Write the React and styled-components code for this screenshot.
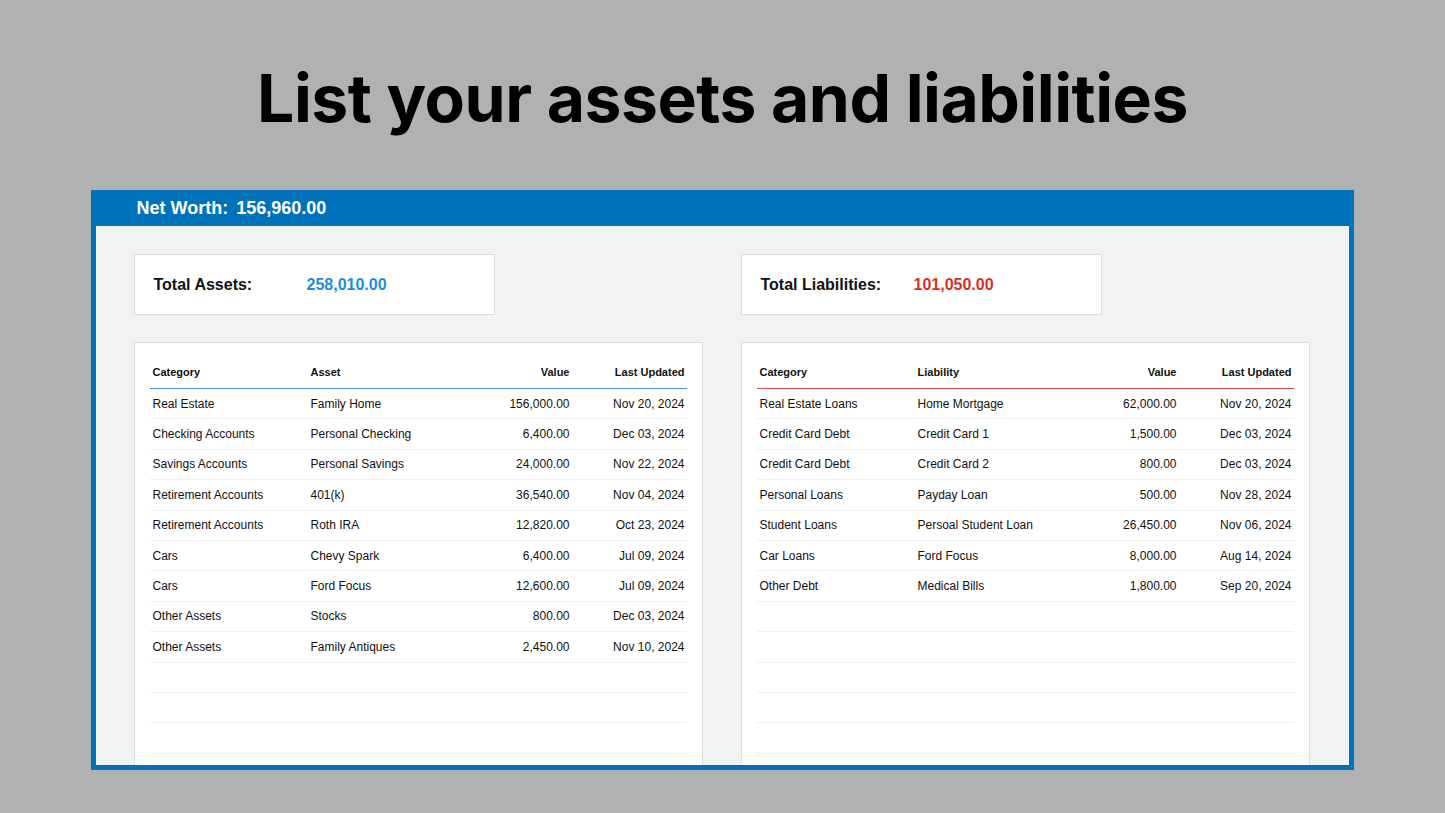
import styled, { createGlobalStyle } from 'styled-components';

const Global = createGlobalStyle`
  body { margin: 0; background: #b0b1b3; font-family: "Liberation Sans", Arial, sans-serif; }
`;

const Page = styled.div`
  width: 1445px;
  height: 813px;
  overflow: hidden;
  display: flex;
  flex-direction: column;
  align-items: center;
`;

const Heading = styled.h1`
  margin: 60px 0 0;
  height: 76px;
  font-family: Inter, "Liberation Sans", sans-serif;
  font-weight: 700;
  font-size: 66px;
  line-height: 76px;
  letter-spacing: -0.5px;
  color: #000;
`;

const Frame = styled.div`
  margin-top: 54px;
  margin-left: -1px;
  width: 1253px;
  height: 575px;
  flex-shrink: 0;
  border: 5px solid #0072bb;
  border-top: none;
  background: #f1f2f4;
  display: flex;
  flex-direction: column;
  overflow: hidden;
`;

const Bar = styled.div`
  background: #0072bb;
  height: 36px;
  flex-shrink: 0;
  margin: 0 -5px;
  padding-left: 46px;
  display: flex;
  align-items: center;
  gap: 8px;
  color: #fff;
  font-weight: 700;
  font-size: 18px;
`;

const Body = styled.div`
  padding: 28px 39px 0 38px;
  display: grid;
  grid-template-columns: 569px 569px;
  column-gap: 38px;
  row-gap: 27px;
`;

const Summary = styled.div`
  width: 361px;
  height: 61px;
  box-sizing: border-box;
  background: #fff;
  border: 1px solid #dcdde0;
  display: flex;
  align-items: center;
  padding-left: 19px;
  font-size: 16px;
  font-weight: 700;
`;

const SumLabel = styled.span`
  width: 153px;
  color: #111;
`;

const SumValue = styled.span`
  color: ${p => p.$color};
`;

const Card = styled.div`
  background: #fff;
  border: 1px solid #dcdde0;
  height: 460px;
  box-sizing: border-box;
  padding: 20px 15px 0;
`;

const Table = styled.table`
  width: 100%;
  border-collapse: collapse;
  font-size: 12px;
  color: #111;
`;

const Th = styled.th`
  font-size: 11px;
  font-weight: 700;
  text-align: ${p => (p.$right ? 'right' : 'left')};
  padding: 0 2px 8px 3px;
  height: 17px;
  border-bottom: 1.5px solid ${p => p.$line};
  width: ${p => p.$w || 'auto'};
`;

const Td = styled.td`
  text-align: ${p => (p.$right ? 'right' : 'left')};
  padding: 0 2px 0 3px;
  height: 29.4px;
  border-bottom: 1px solid #eeeff1;
`;

const assets = [
  ['Real Estate', 'Family Home', '156,000.00', 'Nov 20, 2024'],
  ['Checking Accounts', 'Personal Checking', '6,400.00', 'Dec 03, 2024'],
  ['Savings Accounts', 'Personal Savings', '24,000.00', 'Nov 22, 2024'],
  ['Retirement Accounts', '401(k)', '36,540.00', 'Nov 04, 2024'],
  ['Retirement Accounts', 'Roth IRA', '12,820.00', 'Oct 23, 2024'],
  ['Cars', 'Chevy Spark', '6,400.00', 'Jul 09, 2024'],
  ['Cars', 'Ford Focus', '12,600.00', 'Jul 09, 2024'],
  ['Other Assets', 'Stocks', '800.00', 'Dec 03, 2024'],
  ['Other Assets', 'Family Antiques', '2,450.00', 'Nov 10, 2024'],
];

const liabilities = [
  ['Real Estate Loans', 'Home Mortgage', '62,000.00', 'Nov 20, 2024'],
  ['Credit Card Debt', 'Credit Card 1', '1,500.00', 'Dec 03, 2024'],
  ['Credit Card Debt', 'Credit Card 2', '800.00', 'Dec 03, 2024'],
  ['Personal Loans', 'Payday Loan', '500.00', 'Nov 28, 2024'],
  ['Student Loans', 'Persoal Student Loan', '26,450.00', 'Nov 06, 2024'],
  ['Car Loans', 'Ford Focus', '8,000.00', 'Aug 14, 2024'],
  ['Other Debt', 'Medical Bills', '1,800.00', 'Sep 20, 2024'],
];

const DataTable = ({ kind, rows, line }) => {
  const filled = [...rows];
  while (filled.length < 13) filled.push(['', '', '', '']);
  return (
    <Card>
      <Table>
        <thead>
          <tr>
            <Th $line={line} $w="153px">Category</Th>
            <Th $line={line} $w="150px">{kind}</Th>
            <Th $line={line} $right>Value</Th>
            <Th $line={line} $right $w="110px">Last Updated</Th>
          </tr>
        </thead>
        <tbody>
          {filled.map((r, i) => (
            <tr key={i}>
              <Td>{r[0]}</Td>
              <Td>{r[1]}</Td>
              <Td $right>{r[2]}</Td>
              <Td $right>{r[3]}</Td>
            </tr>
          ))}
        </tbody>
      </Table>
    </Card>
  );
};

export default function App() {
  return (
    <Page>
      <Global />
      <Heading>List your assets and liabilities</Heading>
      <Frame>
        <Bar>
          <span>Net Worth:</span>
          <span>156,960.00</span>
        </Bar>
        <Body>
          <Summary>
            <SumLabel>Total Assets:</SumLabel>
            <SumValue $color="#1a8fd8">258,010.00</SumValue>
          </Summary>
          <Summary>
            <SumLabel>Total Liabilities:</SumLabel>
            <SumValue $color="#d9302c">101,050.00</SumValue>
          </Summary>
          <DataTable kind="Asset" rows={assets} line="#4a90d0" />
          <DataTable kind="Liability" rows={liabilities} line="#d04a4a" />
        </Body>
      </Frame>
    </Page>
  );
}
